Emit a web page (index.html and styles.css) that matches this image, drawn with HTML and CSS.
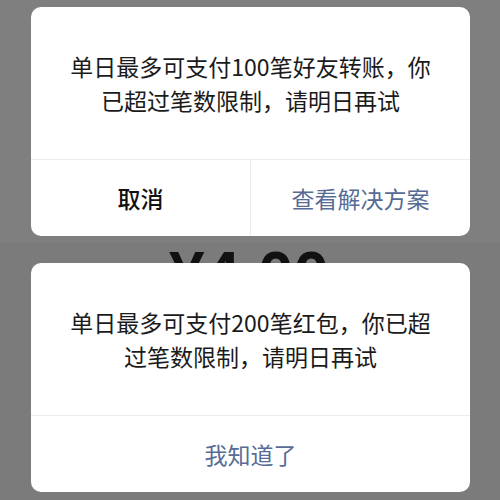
FILE: index.html
```html
<!DOCTYPE html>
<html>
  <head>
    <meta charset="utf-8" />
    <meta name="viewport" content="width=device-width, initial-scale=1" />
    <title>支付限制提示</title>
    <link rel="stylesheet" href="styles.css">
  </head>
  <body>
    <section class="screen screen-top">
      <div class="dialog">
        <div class="dialog-body">
          <p>单日最多可支付100笔好友转账，你<br />已超过笔数限制，请明日再试</p>
        </div>
        <div class="dialog-actions">
          <a class="dialog-btn btn-cancel" href="#">取消</a>
          <a class="dialog-btn btn-primary" href="#">查看解决方案</a>
        </div>
      </div>
    </section>

    <section class="screen screen-bottom">
      <div class="amount-strip">
        <div class="amount">¥4.00</div>
      </div>
      <div class="dialog">
        <div class="dialog-body">
          <p>单日最多可支付200笔红包，你已超<br />过笔数限制，请明日再试</p>
        </div>
        <div class="dialog-actions">
          <a class="dialog-btn btn-primary" href="#">我知道了</a>
        </div>
      </div>
    </section>
  </body>
</html>
```

FILE: styles.css
```css
html,
body {
  margin: 0;
  padding: 0;
}

body {
  width: 500px;
  height: 500px;
  overflow: hidden;
  background-color: #7b7b7b;
  font-family: "Noto Sans CJK SC", "Noto Sans", sans-serif;
}

.screen {
  display: flex;
  flex-direction: column;
}

.screen-top {
  height: 243px;
  background-color: #7f7f7f;
  padding-top: 7px;
  box-sizing: border-box;
}

.screen-bottom {
  height: 257px;
  background-color: #7b7b7b;
}

/* the pay amount behind the second dialog, only its top shows */
.amount-strip {
  height: 20px;
  overflow: hidden;
}

.amount {
  font-family: "Liberation Sans", Arial, sans-serif;
  font-weight: bold;
  font-size: 64px;
  line-height: 65px;
  color: #111;
  text-align: center;
  padding-right: 2px;
}

.dialog {
  width: 439px;
  margin-left: 31px;
  background-color: #fff;
  border-radius: 10px;
  overflow: hidden;
}

.dialog-body {
  height: 153px;
  box-sizing: border-box;
  padding-top: 42px;
  text-align: center;
  border-bottom: 1px solid #ececec;
}

.dialog-body p {
  margin: 0;
  font-size: 23px;
  line-height: 34px;
  color: #1b1b1b;
}

.dialog-actions {
  display: flex;
  height: 76px;
}

.dialog-btn {
  flex: 1;
  display: flex;
  align-items: center;
  justify-content: center;
  font-size: 23px;
  text-decoration: none;
}

.dialog-btn + .dialog-btn {
  border-left: 1px solid #ececec;
}

.btn-cancel {
  color: #111;
  font-weight: 500;
}

.btn-primary {
  color: #576b95;
}
```
